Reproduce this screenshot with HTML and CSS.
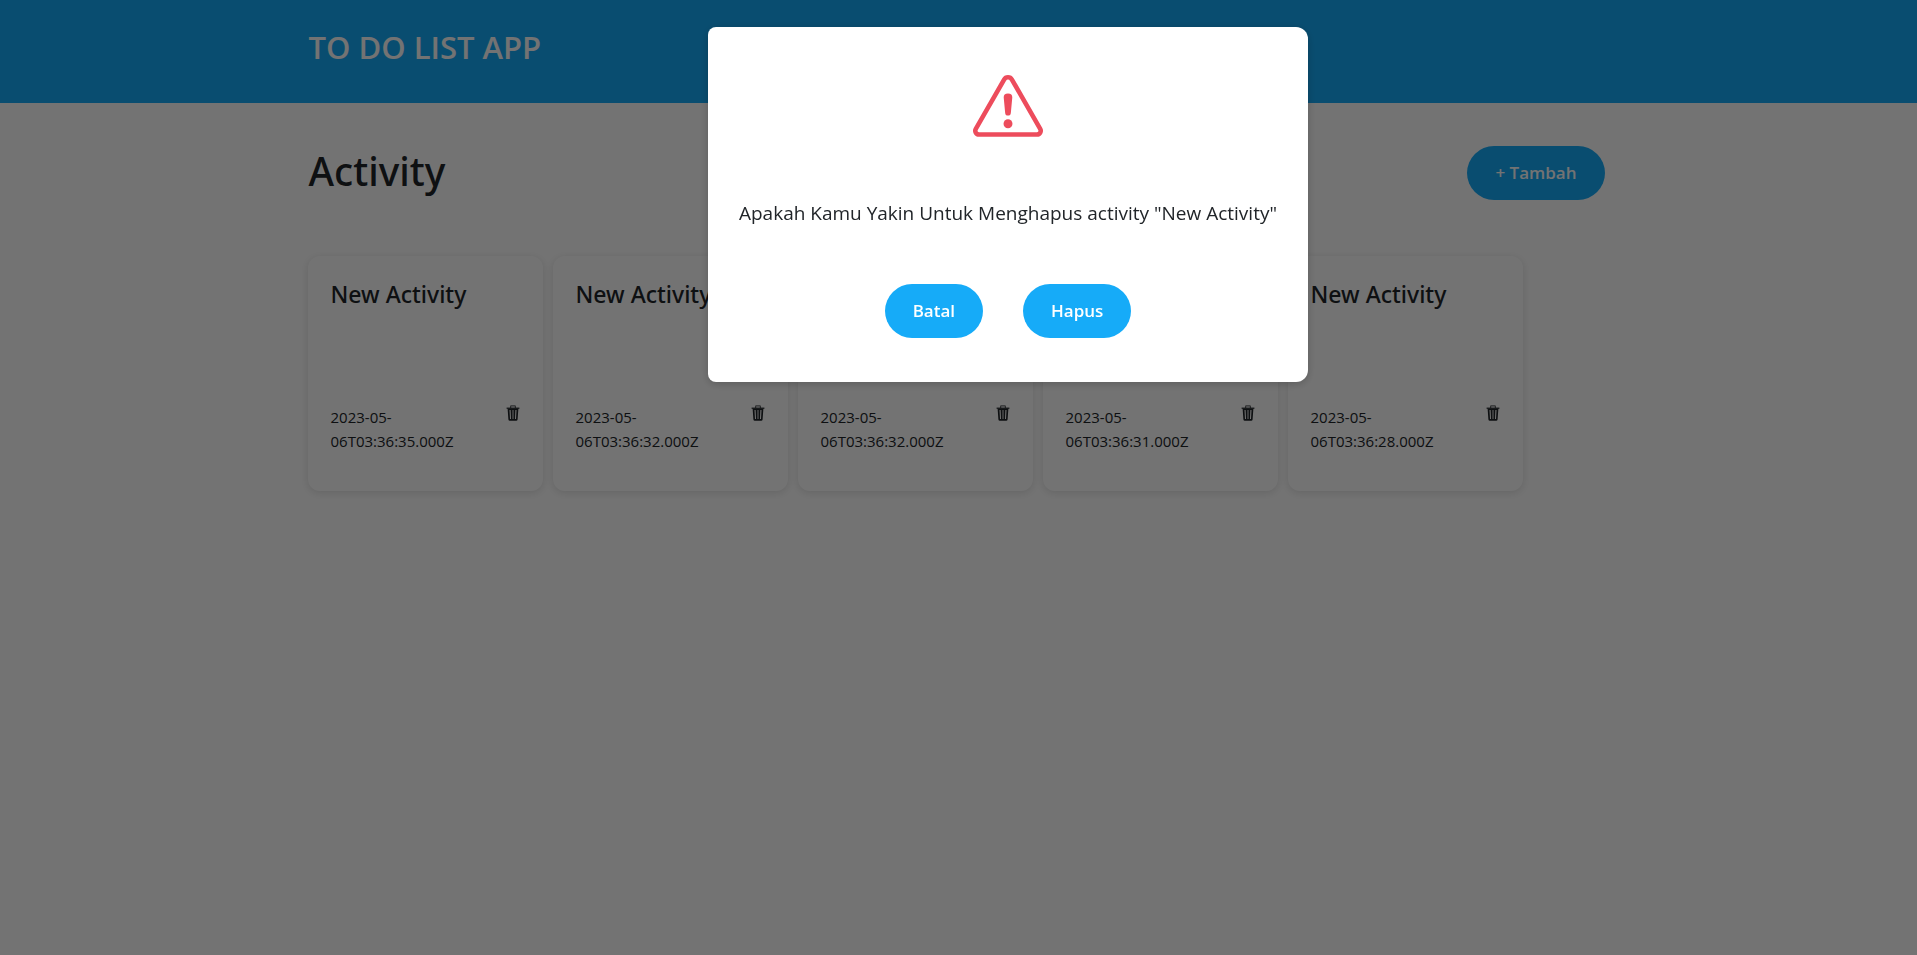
FILE: index.html
```html
<!DOCTYPE html>
<html lang="id">
<head>
<meta charset="utf-8">
<title>To Do List App</title>
<link rel="stylesheet" href="styles.css">
</head>
<body>
<svg class="sprite" aria-hidden="true">
  <symbol id="trash" viewBox="0 0 16 16">
    <path d="M5.6 3V1.6a.7.7 0 0 1 .7-.7h3.4a.7.7 0 0 1 .7.7V3" fill="none" stroke="currentColor" stroke-opacity=".7" stroke-width="1.2"/>
    <path d="M1.6 2.6h12.8v1.2H1.6z"/>
    <path d="M2.6 3.6h10.8l-.8 10.9a1.4 1.4 0 0 1-1.4 1.2H4.8a1.4 1.4 0 0 1-1.4-1.2zM4.5 5l.5 9h1l-.4-9zm3.050 0v9h.9V5zm2.850 0-.4 9h1l.5-9z" fill-rule="evenodd"/>
  </symbol>
</svg>
<header class="navbar">
  <div class="container"><h2 class="brand">TO DO LIST APP</h2></div>
</header>
<main class="container">
  <div class="toolbar">
    <h1 class="title">Activity</h1>
    <button class="btn" type="button">+ Tambah</button>
  </div>
  <div class="cards">
    <article class="card">
      <h4 class="card-title">New Activity</h4>
      <div class="card-foot"><p class="date">2023-05-06T03:36:35.000Z</p><button class="trash" type="button" aria-label="Hapus"><svg class="trash-icon"><use href="#trash"/></svg></button></div>
    </article>
    <article class="card">
      <h4 class="card-title">New Activity</h4>
      <div class="card-foot"><p class="date">2023-05-06T03:36:32.000Z</p><button class="trash" type="button" aria-label="Hapus"><svg class="trash-icon"><use href="#trash"/></svg></button></div>
    </article>
    <article class="card">
      <h4 class="card-title">New Activity</h4>
      <div class="card-foot"><p class="date">2023-05-06T03:36:32.000Z</p><button class="trash" type="button" aria-label="Hapus"><svg class="trash-icon"><use href="#trash"/></svg></button></div>
    </article>
    <article class="card">
      <h4 class="card-title">New Activity</h4>
      <div class="card-foot"><p class="date">2023-05-06T03:36:31.000Z</p><button class="trash" type="button" aria-label="Hapus"><svg class="trash-icon"><use href="#trash"/></svg></button></div>
    </article>
    <article class="card">
      <h4 class="card-title">New Activity</h4>
      <div class="card-foot"><p class="date">2023-05-06T03:36:28.000Z</p><button class="trash" type="button" aria-label="Hapus"><svg class="trash-icon"><use href="#trash"/></svg></button></div>
    </article>
  </div>
</main>
<div class="backdrop">
  <div class="dialog">
    <div class="modal" role="dialog" aria-modal="true" aria-labelledby="question">
      <svg class="warning" viewBox="0 0 84 84" fill="#ed4c5c" aria-hidden="true">
        <path d="M37.900 14.200a4.700 4.700 0 0 1 8.200 0L75.800 66a4 4 0 0 1-3.600 6H11.800A4 4 0 0 1 8.200 66z" fill="none" stroke="#ed4c5c" stroke-width="4.800" stroke-linejoin="round"/>
        <path d="M42 29c3.200 0 4.600 1.500 4.500 4L45 49c-.2 2.400-1.200 3-3 3s-2.800-.6-3-3L37.500 33c-.1-2.500 1.300-4 4.500-4z"/>
        <circle cx="42" cy="60.600" r="4.700"/>
      </svg>
      <p class="question" id="question">Apakah Kamu Yakin Untuk Menghapus activity "New Activity"</p>
      <div class="actions">
        <button class="btn" type="button">Batal</button>
        <button class="btn" type="button">Hapus</button>
      </div>
    </div>
  </div>
</div>
</body>
</html>
```
FILE: styles.css
```css
*{box-sizing:border-box}
body{margin:0;min-height:100vh;background:#fff;color:#212529;font:16px/24px "Open Sans","Noto Sans",sans-serif}
h1,h2,h4,p{margin:0}
button{font:inherit;border:0;cursor:pointer}
.sprite{position:absolute;width:0;height:0}
.container{width:100%;max-width:1300px;margin:0 auto}
.navbar{background:#16abf8;padding:27px 0 36px}
.brand{color:#fff;font-size:31px;line-height:40px;font-weight:600}
.toolbar{display:flex;justify-content:space-between;align-items:center;padding:43px 4px 56px 0}
.title{font-family:"Noto Sans","Open Sans",sans-serif;font-size:39px;line-height:50px;font-weight:500;padding-bottom:4px}
.btn{height:54px;padding:0 28px;border-radius:27px;background:#16abf8;color:#fff;font-size:17px;font-weight:600}
.cards{display:flex;flex-wrap:wrap;gap:10px;margin-left:-1px}
.card{width:235px;height:235px;padding:23px 22px 23px 23px;border-radius:12px;background:#fff;box-shadow:0 2px 8px rgba(0,0,0,.12);display:flex;flex-direction:column;justify-content:space-between}
.card-title{font-family:"Noto Sans","Open Sans",sans-serif;font-size:23px;line-height:30px;font-weight:500}
.card-foot{display:flex;justify-content:space-between;align-items:flex-start;padding-bottom:15px}
.date{font-size:15px;line-height:24px;width:150px;padding-top:4px}
.trash{padding:4px 0 0;background:none;color:#212529;line-height:0}
.trash-icon{width:16px;height:16px;fill:currentColor}
.backdrop{position:fixed;inset:0;background:rgba(0,0,0,.55)}
.dialog{width:501px;margin:27px auto}
.modal{width:600px;padding:39px 24px 44px;background:#fff;border-radius:8px 12px 12px 8px;display:flex;flex-direction:column;align-items:center;box-shadow:0 2px 8px rgba(0,0,0,.2)}
.warning{width:80px;height:80px}
.question{font-size:19px;line-height:30px;white-space:nowrap;padding:52px 0 56px}
.actions{display:flex;gap:40px}
```
